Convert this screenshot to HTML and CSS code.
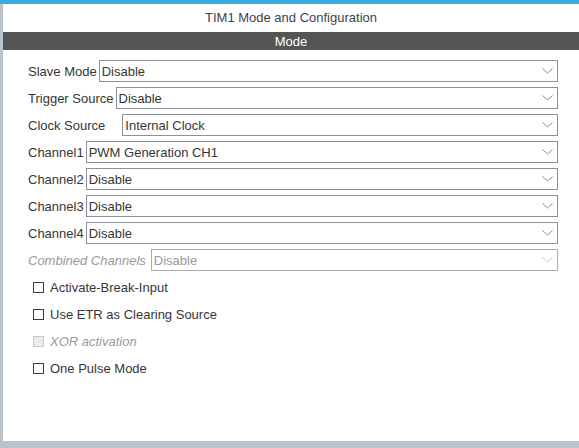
FILE: index.html
```html
<!DOCTYPE html>
<html>
<head>
<meta charset="utf-8">
<link rel="stylesheet" href="styles.css">
</head>
<body>
<div class="topline"></div>
<div class="panel">
  <div class="title">TIM1 Mode and Configuration</div>
  <div class="bar">Mode</div>
  <div class="form">
    <div class="row"><span class="label">Slave Mode</span><div class="select"><span>Disable</span><svg class="chev" width="11" height="6" viewBox="0 0 11 6"><path d="M0.5 0.5 L5.5 5 L10.5 0.5" fill="none" stroke="#8a8d90" stroke-width="1"/></svg></div></div>
    <div class="row"><span class="label">Trigger Source</span><div class="select"><span>Disable</span><svg class="chev" width="11" height="6" viewBox="0 0 11 6"><path d="M0.5 0.5 L5.5 5 L10.5 0.5" fill="none" stroke="#8a8d90" stroke-width="1"/></svg></div></div>
    <div class="row"><span class="label label-clock">Clock Source</span><div class="select"><span>Internal Clock</span><svg class="chev" width="11" height="6" viewBox="0 0 11 6"><path d="M0.5 0.5 L5.5 5 L10.5 0.5" fill="none" stroke="#8a8d90" stroke-width="1"/></svg></div></div>
    <div class="row"><span class="label">Channel1</span><div class="select"><span>PWM Generation CH1</span><svg class="chev" width="11" height="6" viewBox="0 0 11 6"><path d="M0.5 0.5 L5.5 5 L10.5 0.5" fill="none" stroke="#8a8d90" stroke-width="1"/></svg></div></div>
    <div class="row"><span class="label">Channel2</span><div class="select"><span>Disable</span><svg class="chev" width="11" height="6" viewBox="0 0 11 6"><path d="M0.5 0.5 L5.5 5 L10.5 0.5" fill="none" stroke="#8a8d90" stroke-width="1"/></svg></div></div>
    <div class="row"><span class="label">Channel3</span><div class="select"><span>Disable</span><svg class="chev" width="11" height="6" viewBox="0 0 11 6"><path d="M0.5 0.5 L5.5 5 L10.5 0.5" fill="none" stroke="#8a8d90" stroke-width="1"/></svg></div></div>
    <div class="row"><span class="label">Channel4</span><div class="select"><span>Disable</span><svg class="chev" width="11" height="6" viewBox="0 0 11 6"><path d="M0.5 0.5 L5.5 5 L10.5 0.5" fill="none" stroke="#8a8d90" stroke-width="1"/></svg></div></div>
    <div class="row disabled"><span class="label label-combined">Combined Channels</span><div class="select"><span>Disable</span><svg class="chev" width="11" height="6" viewBox="0 0 11 6"><path d="M0.5 0.5 L5.5 5 L10.5 0.5" fill="none" stroke="#c4c6c8" stroke-width="1"/></svg></div></div>
    <div class="row check"><span class="box"></span><span>Activate-Break-Input</span></div>
    <div class="row check"><span class="box"></span><span>Use ETR as Clearing Source</span></div>
    <div class="row check disabled"><span class="box"></span><span class="label">XOR activation</span></div>
    <div class="row check"><span class="box"></span><span>One Pulse Mode</span></div>
  </div>
</div>
</body>
</html>
```
FILE: styles.css
```css
html, body {
  margin: 0;
  padding: 0;
}
body {
  width: 579px;
  height: 448px;
  background: #b9c3c9;
  font-family: "Liberation Sans", Arial, sans-serif;
  font-size: 13px;
  color: #363636;
  overflow: hidden;
}
.topline {
  height: 4px;
  background: #3aa9dc;
}
.panel {
  margin-left: 3px;
  height: 437px;
  background: #ffffff;
}
.title {
  height: 28px;
  line-height: 28px;
  text-align: center;
  color: #3f4150;
}
.bar {
  height: 18px;
  line-height: 19px;
  text-align: center;
  background: #545554;
  color: #ffffff;
}
.form {
  padding: 10px 21px 0 25px;
}
.row {
  display: flex;
  align-items: center;
  height: 22px;
  margin-bottom: 5px;
  white-space: nowrap;
}
.label {
  margin-right: 2px;
}
.label-clock {
  margin-right: 17px;
}
.label-combined {
  margin-right: 5px;
}
.select {
  flex: 1;
  box-sizing: border-box;
  height: 22px;
  border: 1px solid #8c9196;
  padding: 0 4px 0 2px;
  display: flex;
  align-items: center;
  justify-content: space-between;
}
.chev {
  display: block;
}
.disabled .label {
  font-style: italic;
  color: #9a9a9a;
}
.disabled .select {
  border-color: #a9adb1;
  color: #9a9a9a;
}
.check .box {
  box-sizing: border-box;
  width: 11px;
  height: 11px;
  border: 1px solid #3c3c3c;
  background: #ffffff;
  margin-left: 5px;
  margin-right: 6px;
}
.check.disabled .box {
  border-color: #c8c8c8;
  background: #ececec;
}
```
